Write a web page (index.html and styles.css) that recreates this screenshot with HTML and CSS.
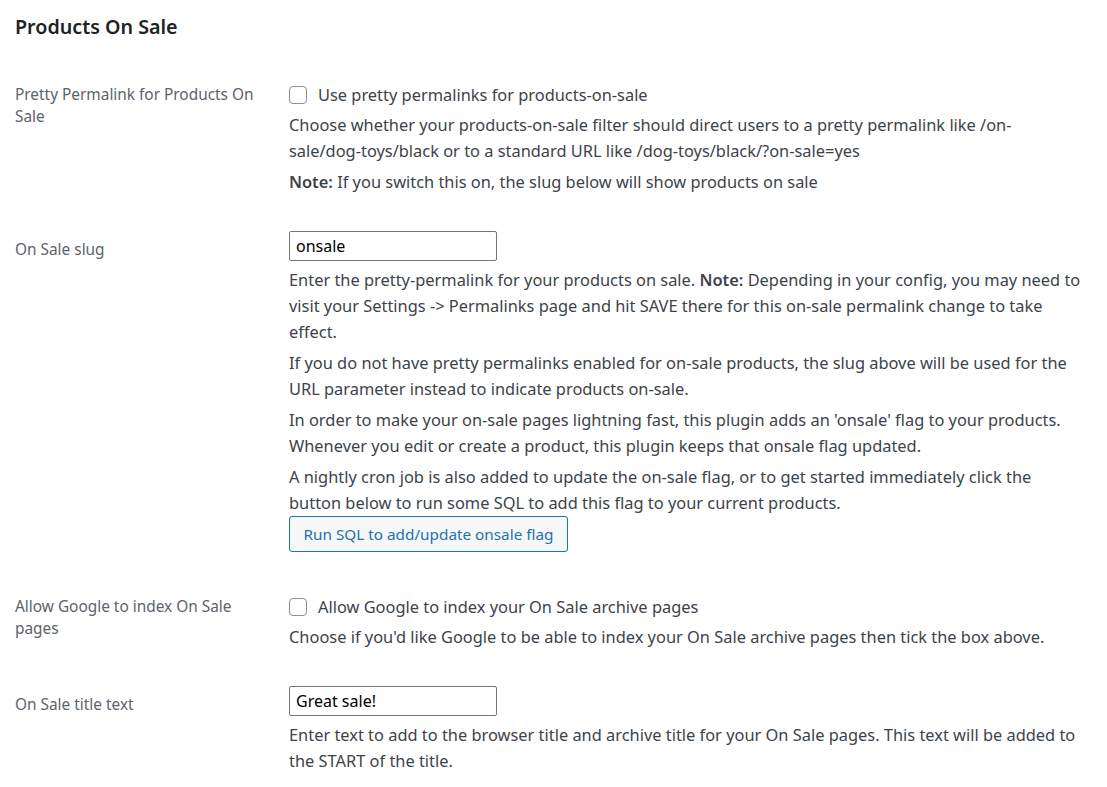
FILE: index.html
```html
<!DOCTYPE html>
<html lang="en">
<head>
    <meta charset="UTF-8">
    <meta name="viewport" content="width=device-width, initial-scale=1.0">
    <title>Products On Sale</title>
    <link rel="stylesheet" href="styles.css">
</head>
<body>
    <div class="settings-wrap">
        <h2>Products On Sale</h2>

        <!-- pretty permalink -->
        <div class="setting-row">
            <div class="setting-label">Pretty Permalink for Products On Sale</div>
            <div class="setting-field">
                <label class="check-line"><input type="checkbox" class="checkbox"> Use pretty permalinks for products-on-sale</label>
                <p class="description">Choose whether your products-on-sale filter should direct users to a pretty permalink like /on-<span class="nowrap">sale/dog-toys/black</span> or to a standard URL like /dog-toys/black/?on-sale=yes</p>
                <p class="description"><strong>Note:</strong> If you switch this on, the slug below will show products on sale</p>
            </div>
        </div>

        <!-- slug -->
        <div class="setting-row">
            <div class="setting-label input-label">On Sale slug</div>
            <div class="setting-field">
                <input type="text" class="text-input" value="onsale">
                <p class="description after-input">Enter the pretty-permalink for your products on sale. <strong>Note:</strong> Depending in your config, you may need to visit your Settings -&gt; Permalinks page and hit SAVE there for this on-sale permalink change to take <span class="nowrap">effect.</span></p>
                <p class="description">If you do not have pretty permalinks enabled for on-sale products, the slug above will be used for the URL parameter instead to indicate products on-sale.</p>
                <p class="description">In order to make your on-sale pages lightning fast, this plugin adds an 'onsale' flag to your products. Whenever you edit or create a product, this plugin keeps that onsale flag updated.</p>
                <p class="description">A nightly cron job is also added to update the on-sale flag, or to get started immediately click the <span class="nowrap">button below</span> to run some SQL to add this flag to your current products.</p>
                <button type="button" class="button">Run SQL to add/update onsale flag</button>
            </div>
        </div>

        <!-- google index -->
        <div class="setting-row">
            <div class="setting-label">Allow Google to index On Sale pages</div>
            <div class="setting-field">
                <label class="check-line"><input type="checkbox" class="checkbox"> Allow Google to index your On Sale archive pages</label>
                <p class="description">Choose if you'd like Google to be able to index your On Sale archive pages then tick the box above.</p>
            </div>
        </div>

        <!-- title text -->
        <div class="setting-row">
            <div class="setting-label input-label">On Sale title text</div>
            <div class="setting-field">
                <input type="text" class="text-input" value="Great sale!">
                <p class="description after-input">Enter text to add to the browser title and archive title for your On Sale pages. This text will be added to the START of the title.</p>
            </div>
        </div>
    </div>
</body>
</html>
```

FILE: styles.css
```css
body {
    margin: 0;
    background-color: #ffffff;
    font-family: "Noto Sans", "Open Sans", Arial, sans-serif;
    font-size: 16.4px;
    color: #3c434a;
}

.settings-wrap {
    padding: 0 10px 0 15px;
}

.settings-wrap h2 {
    margin: 0;
    padding-top: 13px;
    height: 64px;
    box-sizing: border-box;
    font-size: 19.7px;
    font-weight: 600;
    line-height: 28px;
    color: #1d2327;
}

.setting-row {
    display: grid;
    grid-template-columns: 274px 802px;
    padding: 18px 0;
}

.setting-label {
    padding-top: 2px;
    padding-right: 20px;
    font-size: 15.4px;
    line-height: 22px;
    color: #5c636a;
}

.setting-label.input-label {
    padding-top: 8px;
}

.check-line {
    display: flex;
    align-items: center;
    gap: 11px;
    line-height: 26px;
    color: #3c434a;
}

.checkbox {
    appearance: none;
    width: 18px;
    height: 18px;
    margin: 0;
    border: 1px solid #8c8f94;
    border-radius: 4px;
    background: #fff;
}

.description {
    margin: 4px 0 0 0;
    line-height: 26px;
}

.description + .description {
    margin-top: 5px;
}

.description.after-input {
    margin-top: 6px;
}

.description strong {
    font-weight: 600;
}

.nowrap {
    white-space: nowrap;
}

.text-input {
    display: block;
    width: 208px;
    height: 30px;
    box-sizing: border-box;
    margin: 0;
    padding: 0 6px;
    border: 1px solid #767676;
    border-radius: 2px;
    font-family: inherit;
    font-size: 16px;
    color: #000;
}

.button {
    display: block;
    margin: 0 0 6px 0;
    width: 279px;
    height: 36px;
    padding: 0;
    border: 1px solid #2271b1;
    border-radius: 3px;
    background-color: #f6f7f7;
    color: #2271b1;
    font-family: inherit;
    font-size: 15.3px;
    cursor: pointer;
}
```
